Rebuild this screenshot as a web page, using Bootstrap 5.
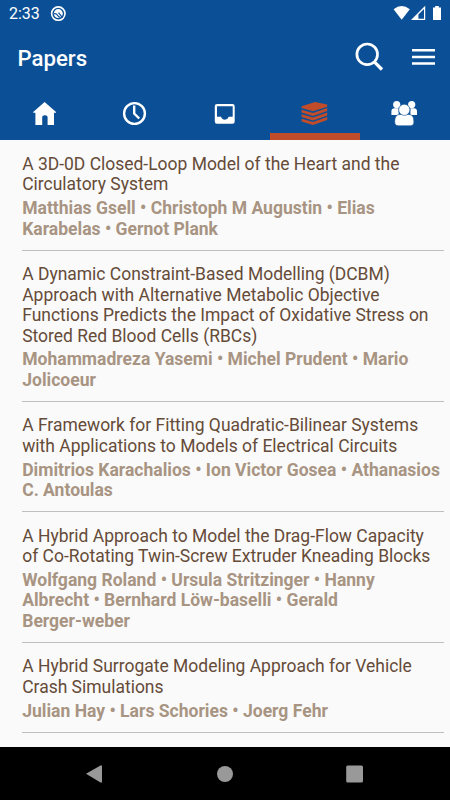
<!DOCTYPE html>
<html lang="en">
<head>
<meta charset="utf-8">
<meta name="viewport" content="width=device-width, initial-scale=1">
<title>Papers</title>
<link href="https://cdn.jsdelivr.net/npm/bootstrap@5.3.0/dist/css/bootstrap.min.css" rel="stylesheet">
<style>
body{font-family:Roboto,"Liberation Sans",sans-serif;background:#fafafa;width:450px;height:800px}
svg{display:block;flex:none}
.app-head{background:#0b5097;height:140px;color:#fff}
.status{height:28px;padding:0 8px 0 9px;font-size:16px;line-height:28px}
.clock{width:41px}
.bar{height:60px;padding:0 14px 0 17.5px}
.bar h1{font-size:22.2px;font-weight:500;line-height:60px}
.tabs{height:52px}
.tab-item{border-bottom:7px solid transparent;padding-top:8px}
.tab-item.active{border-color:#c04c2a;color:#c04c2a}
.papers{padding:.6px 6px 0 22.2px}
.paper{font-size:17.48px;line-height:20.45px;padding:13.3px 0 10.75px;border-bottom:1px solid #bfbfbf}
.paper-title{color:#654b38}
.authors{color:#a89482;font-weight:700;font-size:17.54px;margin-top:3.4px}
.sysnav{height:53px;padding:0 86px 0 85px;color:#999}
</style>
</head>
<body class="d-flex flex-column overflow-hidden">
<header class="app-head flex-shrink-0">
  <div class="status d-flex align-items-center">
    <span class="clock">2:33</span>
    <div class="me-auto"><svg width="16" height="28" viewBox="50 0 16 28"><circle cx="58.3" cy="13.6" r="6.7" fill="none" stroke="#fff" stroke-width="1.6"/><circle cx="58.3" cy="13.6" r="4.500" fill="#fff"/><path d="M54 13.800q2.500-.5 3.500 1.500t3 2M58.500 12.600l4 5" fill="none" stroke="#0b5097" stroke-width="1.200"/></svg></div>
    <svg width="50" height="28" viewBox="392 0 50 28" fill="#fff"><path d="M393.6 9.3Q401.7 2.8 409.8 9.3L401.7 19.8Z"/><path fill-rule="evenodd" d="M411 20L425.2 5.8V20ZM418.4 18.7H424V9.1L418.4 14.6Z"/><path d="M433 7.5h2.2V6h3.6v1.500h2.200v12.500h-8z"/></svg>
  </div>
  <div class="bar d-flex align-items-center">
    <h1 class="m-0 me-auto">Papers</h1>
    <svg width="82" height="60" viewBox="354 28 82 60" fill="none" stroke="#fff"><circle cx="367.200" cy="54.300" r="10.300" stroke-width="2.700"/><path d="M374.300 61.800L382 69.500" stroke-width="3.300"/><path d="M412 50.300h23M412 57h23M412 63.500h23" stroke-width="2.400"/></svg>
  </div>
  <nav class="tabs row row-cols-5 g-0">
    <div class="col tab-item d-flex justify-content-center"><svg width="26" height="36" viewBox="32 96 26 36" fill="#fff"><path d="M44.600 102L56 112v.8h-2V125h-6.400v-7.500q0-2.300-2.700-2.300t-2.700 2.300V125h-6.800v-12.200h-2.200V112z"/></svg></div>
    <div class="col tab-item d-flex justify-content-center"><svg width="26" height="36" viewBox="122 96 26 36" fill="none" stroke="#fff"><circle cx="134.500" cy="113.500" r="10.400" stroke-width="2.400"/><path d="M134.200 105.500v8l5 5" stroke-width="2.400"/></svg></div>
    <div class="col tab-item d-flex justify-content-center"><svg width="26" height="36" viewBox="212 96 26 36"><path fill="#fff" fill-rule="evenodd" d="M217 104h15.500q2.200 0 2.200 2.200v15.300q0 2.200-2.200 2.200H217q-2.200 0-2.200-2.200v-15.300q0-2.200 2.200-2.200zM217 106.200v10.600h4q.3 0 .7 1.500 1 1.400 3 1.400t3.200-1.400q.4-1.500.9-1.500h3.900v-10.600z"/></svg></div>
    <div class="col tab-item active d-flex justify-content-center"><svg width="28" height="36" viewBox="301 96 28 36" fill="currentColor"><path d="M301.600 106.300L315 102l12.200 2.400v2.300L313 111.200l-11.400-3.300z"/><path id="sheet" d="M301.600 109.800l11.400 3.200 14.200-4.900v3L313 115.900l-11.400-3.300z"/><use href="#sheet" y="4.500"/><use href="#sheet" y="9"/></svg></div>
    <div class="col tab-item d-flex justify-content-center"><svg width="28" height="36" viewBox="391 96 28 36" fill="#fff"><circle cx="396.700" cy="104.600" r="3.600"/><circle cx="411.700" cy="104.600" r="3.600"/><path d="M391.400 115v-3.800q0-3 3.300-3h3.900v6.800zM417 115v-3.800q0-3-3.300-3h-3.300v6.800z"/><path stroke="#0b5097" stroke-width=".6" d="M394.700 121.500q0-7 5-7h9.200q5 0 5 7 0 4.300-3.500 4.300h-12q-3.700 0-3.700-4.300z"/><circle cx="404.300" cy="109.800" r="5.600" stroke="#0b5097" stroke-width=".6"/></svg></div>
  </nav>
</header>
<main class="papers flex-grow-1 overflow-hidden">
  <article class="paper"><div class="paper-title">A 3D-0D Closed-Loop Model of the Heart and the Circulatory System</div><div class="authors">Matthias Gsell • Christoph M Augustin • Elias Karabelas • Gernot Plank</div></article>
  <article class="paper"><div class="paper-title">A Dynamic Constraint-Based Modelling (DCBM) Approach with Alternative Metabolic Objective Functions Predicts the Impact of Oxidative Stress on Stored Red Blood Cells (RBCs)</div><div class="authors">Mohammadreza Yasemi • Michel Prudent • Mario Jolicoeur</div></article>
  <article class="paper"><div class="paper-title">A Framework for Fitting Quadratic-Bilinear Systems with Applications to Models of Electrical Circuits</div><div class="authors">Dimitrios Karachalios • Ion Victor Gosea • Athanasios C. Antoulas</div></article>
  <article class="paper"><div class="paper-title">A Hybrid Approach to Model the Drag-Flow Capacity<br>of Co-Rotating Twin-Screw Extruder Kneading Blocks</div><div class="authors">Wolfgang Roland • Ursula Stritzinger • Hanny Albrecht • Bernhard Löw-baselli • Gerald<br>Berger-weber</div></article>
  <article class="paper"><div class="paper-title">A Hybrid Surrogate Modeling Approach for Vehicle Crash Simulations</div><div class="authors">Julian Hay • Lars Schories • Joerg Fehr</div></article>
</main>
<footer class="sysnav bg-black d-flex align-items-center justify-content-between flex-shrink-0">
  <svg width="17" height="18" viewBox="0 0 17 18" fill="currentColor"><path d="M1 8.700L15.500.5h1.500v17h-1.500z"/></svg>
  <svg width="17" height="18" viewBox="0 0 17 18" fill="currentColor"><circle cx="9" cy="9" r="8"/></svg>
  <svg width="18" height="18" viewBox="0 0 18 18" fill="currentColor"><rect x=".200" y=".500" width="16.800" height="17" rx="1.500"/></svg>
</footer>
<script src="https://cdn.jsdelivr.net/npm/bootstrap@5.3.0/dist/js/bootstrap.bundle.min.js"></script>
</body>
</html>
